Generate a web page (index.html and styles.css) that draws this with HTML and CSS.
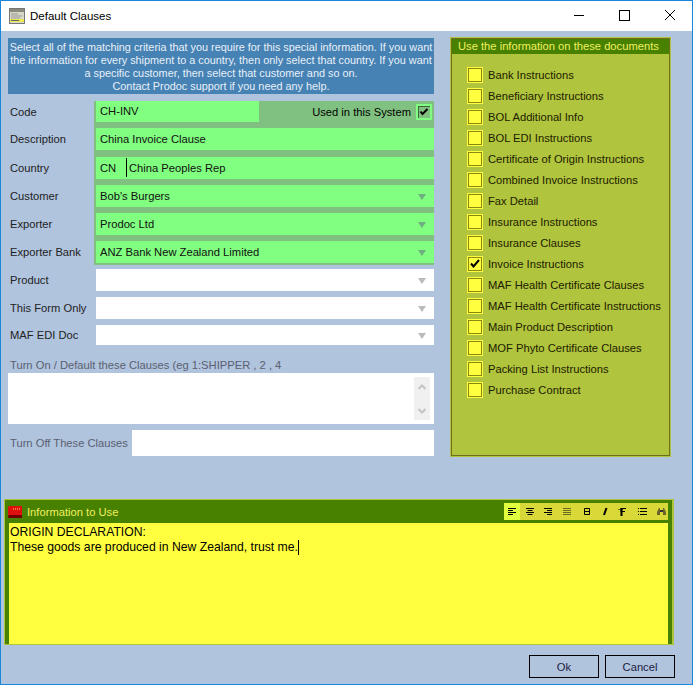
FILE: index.html
```html
<!DOCTYPE html>
<html lang="en">
<head>
<meta charset="utf-8">
<title>Default Clauses</title>
<link rel="stylesheet" href="styles.css">
</head>
<body>
<div class="window">
  <header class="titlebar">
    <svg class="app-icon" width="16" height="16" viewBox="0 0 16 16"><rect x="0.5" y="0.5" width="15" height="15" fill="#d8d8c8" stroke="#777"/><rect x="1" y="1" width="14" height="3" fill="#8a8a7a"/><path d="M2 6h7M2 8h11M2 10h9" stroke="#999" /><rect x="1" y="11" width="14" height="3" fill="#e8e850"/><path d="M2 12.5h8" stroke="#666"/></svg>
    <span class="title">Default Clauses</span>
    <div class="controls">
      <svg width="12" height="12" viewBox="0 0 12 12"><path d="M2 5.500h10" stroke="#000"/></svg>
      <svg width="12" height="12" viewBox="0 0 12 12"><rect x="1.500" y="0.500" width="10" height="10" fill="none" stroke="#000"/></svg>
      <svg width="12" height="12" viewBox="0 0 12 12"><path d="M1 0l10 10M11 0L1 10" stroke="#000" fill="none"/></svg>
    </div>
  </header>
  <div class="content">
    <main class="top">
      <section class="left">
        <div class="info">Select all of the matching criteria that you require for this special information. If you want<br>the information for every shipment to a country, then only select that country. If you want<br>a specific customer, then select that customer and so on.<br>Contact Prodoc support if you need any help.</div>
        <div class="form">
          <div class="row row-first"><label>Code</label><div class="cell"><div class="split"><div class="field code">CH-INV</div><div class="used"><span>Used in this System</span><span class="sys-check"><svg width="10" height="9" viewBox="0 0 10 9"><path d="M1.500 4.500l2 2.500L8.500 2" fill="none" stroke="#000" stroke-width="2"/></svg></span></div></div></div></div>
          <div class="row row-gap7"><label>Description</label><div class="cell"><div class="field">China Invoice Clause</div></div></div>
          <div class="row"><label>Country</label><div class="cell"><div class="field country"><span class="cc">CN</span><span class="cname">China Peoples Rep</span></div></div></div>
          <div class="row"><label>Customer</label><div class="cell"><div class="field combo">Bob's Burgers<i class="arrow"></i></div></div></div>
          <div class="row"><label>Exporter</label><div class="cell"><div class="field combo">Prodoc Ltd<i class="arrow"></i></div></div></div>
          <div class="row row-last"><label>Exporter Bank</label><div class="cell"><div class="field combo">ANZ Bank New Zealand Limited<i class="arrow"></i></div></div></div>
          <div class="row plain"><label>Product</label><div class="cell"><div class="field combo blank"><i class="arrow"></i></div></div></div>
          <div class="row plain"><label>This Form Only</label><div class="cell"><div class="field combo blank"><i class="arrow"></i></div></div></div>
          <div class="row plain end"><label>MAF EDI Doc</label><div class="cell"><div class="field combo blank short"><i class="arrow"></i></div></div></div>
        </div>
        <div class="muted on-label">Turn On / Default these Clauses (eg 1:SHIPPER , 2 , 4</div>
        <div class="memo">
          <div class="scroll">
            <svg width="8" height="6" viewBox="0 0 8 6"><path d="M0.500 5L4 1.500 7.500 5" fill="none" stroke="#c4c4c4" stroke-width="2"/></svg>
            <svg width="8" height="6" viewBox="0 0 8 6"><path d="M0.500 1L4 4.500 7.500 1" fill="none" stroke="#c4c4c4" stroke-width="2"/></svg>
          </div>
        </div>
        <div class="off"><span class="muted">Turn Off These Clauses</span><div class="off-box"></div></div>
      </section>
      <aside class="docs">
        <h2>Use the information on these documents</h2>
        <ul>
          <li><span class="box"></span>Bank Instructions</li>
          <li><span class="box"></span>Beneficiary Instructions</li>
          <li><span class="box"></span>BOL Additional Info</li>
          <li><span class="box"></span>BOL EDI Instructions</li>
          <li><span class="box"></span>Certificate of Origin Instructions</li>
          <li><span class="box"></span>Combined Invoice Instructions</li>
          <li><span class="box"></span>Fax Detail</li>
          <li><span class="box"></span>Insurance Instructions</li>
          <li><span class="box"></span>Insurance Clauses</li>
          <li><span class="box"><svg width="10" height="9" viewBox="0 0 10 9"><path d="M1 4.500l2.500 3L9 1" fill="none" stroke="#000" stroke-width="2"/></svg></span>Invoice Instructions</li>
          <li><span class="box"></span>MAF Health Certificate Clauses</li>
          <li><span class="box"></span>MAF Health Certificate Instructions</li>
          <li><span class="box"></span>Main Product Description</li>
          <li><span class="box"></span>MOF Phyto Certificate Clauses</li>
          <li><span class="box"></span>Packing List Instructions</li>
          <li><span class="box"></span>Purchase Contract</li>
        </ul>
      </aside>
    </main>
    <section class="editor">
      <div class="editor-inner">
        <div class="editor-head">
          <svg class="book" width="16" height="12" viewBox="0 0 16 12"><path d="M1 1.500Q1 0 2.500 0H15V9H2.500Q1 9 1 10.500Z" fill="#e01010"/><path d="M1 10.500Q1 9 2.500 9H15V12H2.500Q1 12 1 10.500Z" fill="#700000"/><path d="M6 3h1M8 3h1M10 3h1M12 3h1" stroke="#ffe060"/></svg>
          <span class="editor-title">Information to Use</span>
          <div class="tools">
            <span class="tool active"><svg width="10" height="9" viewBox="0 0 10 9"><path d="M1 1.500h8M1 3.500h5M1 5.500h8M1 7.500h5" stroke="#000"/></svg></span>
            <span class="tool"><svg width="10" height="9" viewBox="0 0 10 9"><path d="M1 1.500h8M2.500 3.500h5M1 5.500h8M2.500 7.500h5" stroke="#000"/></svg></span>
            <span class="tool"><svg width="10" height="9" viewBox="0 0 10 9"><path d="M1 1.500h8M4 3.500h5M1 5.500h8M4 7.500h5" stroke="#000"/></svg></span>
            <span class="tool"><svg width="10" height="9" viewBox="0 0 10 9"><path d="M1 1.500h8M1 3.500h8M1 5.500h8M1 7.500h8" stroke="#6a6a20"/></svg></span>
            <span class="tool"><svg width="8" height="9" viewBox="0 0 8 9"><path d="M1.500 1.500h5v6h-5zM1.500 4.500h5" fill="none" stroke="#000"/></svg></span>
            <span class="tool"><svg width="6" height="9" viewBox="0 0 6 9"><path d="M4.500 1L2 8" fill="none" stroke="#000" stroke-width="2"/></svg></span>
            <span class="tool"><svg width="10" height="9" viewBox="0 0 10 9"><path d="M1 2.500h5M3.500 1v4" stroke="#6a7a10" fill="none"/><path d="M4.500 1v8" stroke="#000" stroke-width="2"/><path d="M5 1.500h4M5 4.500h3" stroke="#000"/></svg></span>
            <span class="tool"><svg width="9" height="9" viewBox="0 0 9 9"><path d="M0 1.500h1M0 4.500h1M0 7.500h1M2 1.500h7M2 4.500h7M2 7.500h7" stroke="#000"/></svg></span>
            <span class="tool"><svg width="11" height="9" viewBox="0 0 11 9"><path d="M1 8V5l2-4h1v7zM10 8V5L8 1H7v7z" fill="#6a6428"/><rect x="4" y="3" width="3" height="2" fill="#333"/></svg></span>
          </div>
        </div>
        <div class="editor-body">ORIGIN DECLARATION:<br>These goods are produced in New Zealand, trust me.<span class="caret"></span></div>
      </div>
    </section>
    <footer class="buttons">
      <button type="button">Ok</button>
      <button type="button">Cancel</button>
    </footer>
  </div>
</div>
</body>
</html>
```
FILE: styles.css
```css
* { box-sizing: border-box; }
html, body { margin: 0; padding: 0; }
body { width: 694px; height: 685px; overflow: hidden; background: #fff; font-family: "Liberation Sans", Arial, sans-serif; font-size: 11.2px; color: #101010; }
.window { width: 693px; height: 685px; border: 1px solid #1a86d9; background: #b0c4de; display: flex; flex-direction: column; }
.titlebar { height: 30px; flex: none; background: #fff; display: flex; align-items: center; padding: 0 0 0 8px; }
.app-icon { flex: none; margin-top: -1px; }
.title { margin-left: 5px; color: #000; font-size: 11.5px; }
.controls { margin-left: auto; display: flex; gap: 34px; padding-right: 16px; }
.content { flex: 1; display: flex; flex-direction: column; padding: 7px 0 0 7px; }
.top { display: flex; height: 461px; }
.left { width: 426px; flex: none; }
.info { height: 56px; background: #4682b4; color: #e8f0f8; font-size: 10.85px; text-align: center; line-height: 13px; padding-top: 3px; white-space: nowrap; }
.form { margin-top: 7px; }
.row { display: grid; grid-template-columns: 86px 340px; }
.row label { padding-left: 2px; align-self: start; line-height: 22px; color: #222; white-space: nowrap; }
.cell { background: #80c080; padding: 0 0 6px 2px; }
.field { height: 22px; background: #80ff80; line-height: 22px; padding-left: 4px; position: relative; color: #101010; white-space: nowrap; }
.row-gap7 .cell { padding-bottom: 7px; }
.row-last { margin-bottom: 4px; }
.row-last .cell { padding-bottom: 2px; }
.plain .cell { background: none; }
.plain.end .cell { padding-bottom: 0; }
.plain.end label { line-height: 20px; height: 20px; }
.blank { background: #fff; }
.short { height: 20px; }
.split { display: flex; height: 21px; }
.code { width: 163px; height: 21px; line-height: 21px; flex: none; }
.used { flex: 1; display: flex; justify-content: flex-end; align-items: center; gap: 5px; padding-right: 2px; color: #000; }
.sys-check { width: 16px; height: 16px; border: 2px solid #80ff80; background: #80c080; outline: 0; box-shadow: inset 1px 1px 0 #406040; display: flex; align-items: center; justify-content: center; }
.country { display: flex; }
.cc { width: 26px; position: relative; flex: none; }
.cc::after { content: ""; position: absolute; left: 26px; top: 1px; bottom: 2px; width: 1px; background: #000; }
.cname { margin-left: 3px; }
.arrow { position: absolute; right: 8px; top: 9px; border-style: solid; border-width: 6px 4px 0; border-color: #6fae80 transparent transparent; }
.blank .arrow { border-top-color: #bbb; }
.short .arrow { top: 8px; }
.muted { color: #5a6070; }
.on-label { height: 28px; line-height: 14px; padding: 13px 0 0 2px; white-space: nowrap; }
.memo { height: 51px; background: #fff; padding: 4px 4px 4px 406px; }
.scroll { width: 16px; height: 43px; background: #f0f0f0; display: flex; flex-direction: column; justify-content: space-between; align-items: center; padding: 7px 0 6px; }
.off { display: flex; height: 26px; margin-top: 6px; align-items: center; padding-left: 2px; white-space: nowrap; }
.off-box { margin-left: auto; width: 302px; height: 26px; flex: none; background: #fff; }
.docs { width: 219px; height: 418px; margin-left: 17px; background: #b0c43e; border: 1px solid #6e7020; box-shadow: 0 0 0 1px #b0c43e; }
.docs h2 { margin: 0; height: 15px; background: #488000; color: #f0f060; font: inherit; line-height: 15px; padding-left: 6px; white-space: nowrap; }
.docs ul { list-style: none; margin: 0; padding: 10px 0 0 15px; }
.docs li { height: 21px; display: flex; align-items: center; gap: 5px; color: #202000; white-space: nowrap; }
.box { width: 16px; height: 16px; border: 1px solid #ffff40; background: #ffff40; box-shadow: inset 0 0 0 1px #8a8a10; display: flex; align-items: center; justify-content: center; flex: none; }
.editor { margin-left: -4px; width: 670px; height: 146px; background: #b0c43e; padding: 1px 2px 1px 1px; flex: none; }
.editor-inner { height: 100%; background: #488000; padding: 0 4px 0 4px; display: flex; flex-direction: column; }
.editor-head { height: 23px; flex: none; margin-left: -4px; display: flex; align-items: center; padding: 0 0 0 2px; }
.book { flex: none; }
.editor-title { margin-left: 4px; color: #f0f060; }
.tools { margin-left: auto; width: 164px; height: 17px; background: #d8d838; display: grid; grid-template-columns: 16px 20px 16px 22px 18px 18px 16px 24px 14px; align-items: center; }
.tool { height: 17px; display: flex; align-items: center; justify-content: center; }
.tool svg { flex: none; }
.tool.active { background: #dfff3f; }
.editor-body { flex: 1; background: #ffff40; color: #000; line-height: 15px; font-size: 12.2px; padding: 2px 0 0 1px; white-space: nowrap; }
.caret { display: inline-block; width: 1px; height: 15px; background: #000; vertical-align: top; }
.buttons { display: flex; gap: 6px; padding: 10px 0 0 521px; }
.buttons button { width: 70px; height: 23px; background: transparent; border: 1px solid #000; font: inherit; color: #202040; padding: 0; }
```
